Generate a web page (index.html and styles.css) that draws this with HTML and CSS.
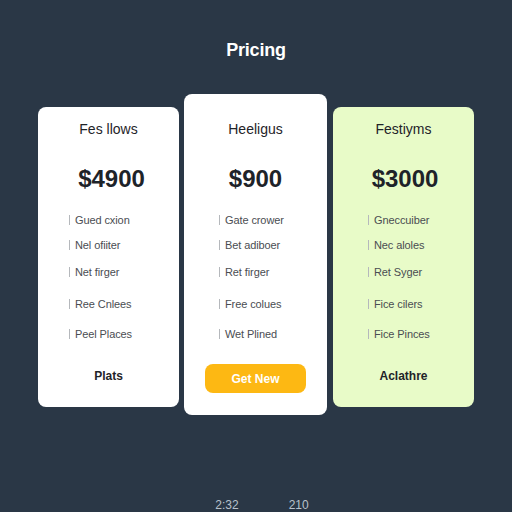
FILE: index.html
```html
<!DOCTYPE html>
<html>
<head>
<meta charset="utf-8">
<link rel="stylesheet" href="styles.css">
</head>
<body>
<div class="page">
  <h1 class="title">Pricing</h1>
  <div class="plans">
    <div class="card card-side card-first">
      <div class="card-name">Fes llows</div>
      <div class="price">$4900</div>
      <ul class="features">
        <li>Gued cxion</li>
        <li>Nel ofiiter</li>
        <li>Net firger</li>
        <li>Ree Cnlees</li>
        <li>Peel Places</li>
      </ul>
      <div class="card-foot">Plats</div>
    </div>
    <div class="card card-main">
      <div class="card-name">Heeligus</div>
      <div class="price">$900</div>
      <ul class="features">
        <li>Gate crower</li>
        <li>Bet adiboer</li>
        <li>Ret firger</li>
        <li>Free colues</li>
        <li>Wet Plined</li>
      </ul>
      <button class="cta">Get New</button>
    </div>
    <div class="card card-side card-green">
      <div class="card-name">Festiyms</div>
      <div class="price">$3000</div>
      <ul class="features">
        <li>Gneccuiber</li>
        <li>Nec aloles</li>
        <li>Ret Syger</li>
        <li>Fice cilers</li>
        <li>Fice Pinces</li>
      </ul>
      <div class="card-foot">Aclathre</div>
    </div>
  </div>
  <div class="bottom-nums">
    <span>2:32</span>
    <span>210</span>
  </div>
</div>
</body>
</html>
```

FILE: styles.css
```css
* { box-sizing: border-box; }

html, body {
  margin: 0;
  padding: 0;
  background: #2a3746;
  font-family: "Liberation Sans", Arial, sans-serif;
}

.page {
  height: 512px;
  overflow: hidden;
  display: flex;
  flex-direction: column;
  align-items: center;
}

.title {
  margin: 40px 0 0;
  font-size: 18px;
  line-height: 20px;
  font-weight: bold;
  color: #ffffff;
  letter-spacing: -0.2px;
}

.plans {
  margin-top: 34px;
  display: flex;
  align-items: flex-start;
  gap: 5px;
}

.card {
  width: 141px;
  background: #ffffff;
  border-radius: 8px;
  display: flex;
  flex-direction: column;
  align-items: center;
}

.card-side {
  height: 300px;
  margin-top: 13px;
  padding: 13px 0 23px;
}

.card-main {
  width: 143px;
  height: 321px;
  padding: 26px 0 22px;
  margin-right: 1px;
}

.card-green {
  background: #e8fbc8;
}

.card-name {
  font-size: 14px;
  line-height: 18px;
  color: #1f2328;
}

.price {
  margin-top: 27px;
  font-size: 24px;
  line-height: 28px;
  font-weight: bold;
  color: #1e2329;
}

.card-first .price { padding-left: 6px; }
.card-green .price { padding-left: 3px; }

.features {
  list-style: none;
  margin: 20px 0 0;
  padding: 0 0 0 35px;
  align-self: stretch;
}

.card-first .features { padding-left: 31px; }

.features li {
  font-size: 11px;
  line-height: 14px;
  color: #4a4d52;
  display: flex;
  align-items: center;
  letter-spacing: -0.1px;
}

.features li::before {
  content: "";
  width: 1px;
  height: 10px;
  background: #b5b8bc;
  margin-right: 5px;
}

.features li + li { margin-top: 11px; }
.features li:nth-child(3) { margin-top: 13px; }
.features li:nth-child(4) { margin-top: 18px; }
.features li:nth-child(5) { margin-top: 16px; }

.card-foot {
  margin-top: auto;
  font-size: 12px;
  line-height: 16px;
  font-weight: bold;
  color: #1f2328;
}

.cta {
  margin-top: auto;
  width: 101px;
  height: 29px;
  border: none;
  border-radius: 8px;
  background: #fdb813;
  color: #ffffff;
  font-family: "Liberation Sans", Arial, sans-serif;
  font-size: 12px;
  font-weight: bold;
}

.bottom-nums {
  margin-top: auto;
  margin-bottom: 0;
  padding-left: 12px;
  display: flex;
  gap: 50px;
  font-size: 12px;
  line-height: 13px;
  color: #b7c1cb;
}
```
